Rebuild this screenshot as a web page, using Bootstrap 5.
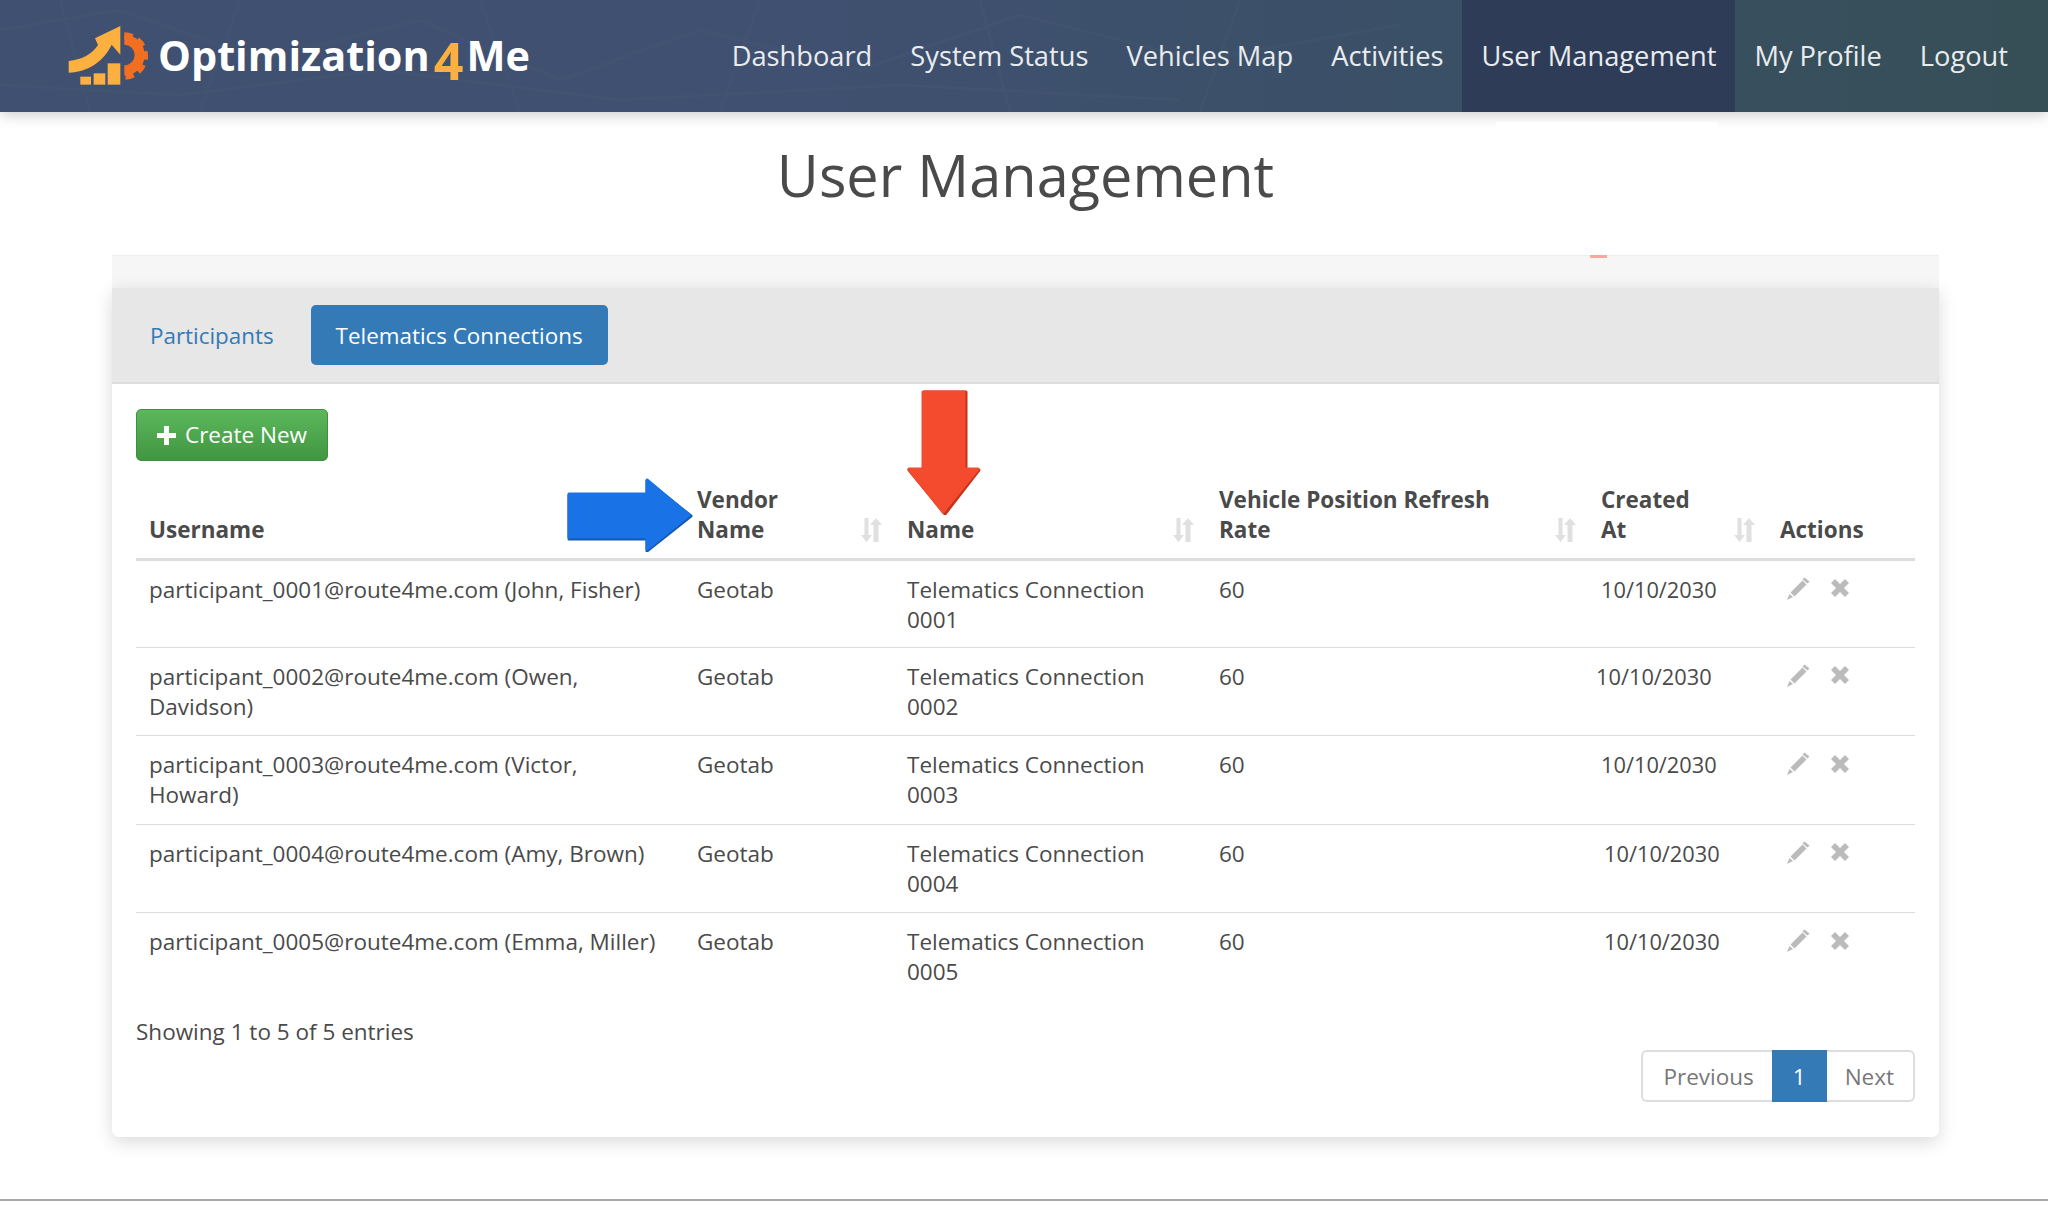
<!DOCTYPE html>
<html lang="en">
<head>
  <meta charset="UTF-8">
  <title>User Management | Optimization4Me</title>
  <link href="https://cdn.jsdelivr.net/npm/bootstrap@5.3.0/dist/css/bootstrap.min.css" rel="stylesheet">
  <style>
    body {
      font-family: "Open Sans", "Liberation Sans", sans-serif;
      font-size: 22.5px;
      line-height: 30px;
      color: #4a4a4a;
      background: #fff;
    }
    .site-bar {
      height: 112px;
      padding: 0 21px 0 0;
      background: linear-gradient(90deg, #3f5070 0%, #3f5070 40%, #3a5066 70%, #364f56 100%);
      box-shadow: 0 2px 14px rgba(0, 0, 0, .22);
      position: relative;
    }
    .bar-texture { position: absolute; left: 0; top: 0; }
    .site-bar .navbar-brand {
      display: flex;
      align-items: center;
      padding: 0;
      margin: 0 0 0 67px;
      font-size: 41.400px;
      font-weight: 700;
      color: #fff;
      line-height: 1;
      position: relative;
    }
    .logo-mark { margin-right: 5px; margin-top: -3px; }
    .logo-four { color: #fbb040; font-size: 52px; margin: 8px 3px 0 4px; line-height: 1; }
    .site-bar .navbar-nav { position: relative; }
    .site-bar .navbar-nav .nav-link {
      height: 112px;
      line-height: 112px;
      padding: 0 19px;
      font-size: 27.250px;
      color: #e9ecef;
    }
    .site-bar .navbar-nav .nav-link.active { background: #2f3c58; color: #e9ecef; }
    .shadow-patch {
      position: absolute;
      left: 1496px;
      top: 122px;
      width: 221px;
      height: 12px;
      background: #fff;
    }
    .page-title {
      font-size: 57.700px;
      line-height: 66px;
      font-weight: 400;
      text-align: center;
      color: #4a4a4a;
      margin: 30px 0 47px;
      padding-left: 3px;
    }
    .content-wrap { margin: 0 109px 0 112px; }
    .top-strip { height: 33px; background: #f6f6f6; border-top: 1px solid #eee; position: relative; }
    .strip-dot { position: absolute; left: 1478px; top: -1px; width: 17px; height: 3px; background: #f8a99b; }
    .panel-box {
      border: 0;
      border-radius: 0 0 7px 7px;
      box-shadow: 0 5px 18px rgba(0, 0, 0, .15);
      position: relative;
      height: 849px;
    }
    .panel-box .card-header {
      height: 96px;
      padding: 17px 13px;
      background: #e7e7e7;
      border-bottom: 2px solid #ddd;
      border-radius: 0;
    }
    .panel-box .nav-pills { gap: 12px; }
    .panel-box .nav-link {
      height: 60px;
      padding: 0 25px;
      line-height: 61px;
      font-size: 22.400px;
      color: #337ab7;
      border-radius: 5px;
    }
    .panel-box .nav-link.active { background: #337ab7; color: #fff; }
    .panel-box .card-body { padding: 25px 24px 0; }
    .btn-create {
      display: inline-flex;
      align-items: center;
      gap: 9px;
      width: 192px;
      height: 52px;
      padding: 0 0 0 20px;
      font-size: 22.500px;
      color: #fff;
      background: linear-gradient(180deg, #5cb85c 0%, #419641 100%);
      border: 1px solid #3e8f3e;
      border-radius: 5px;
    }
    .btn-create:hover { color: #fff; }
    .user-table { table-layout: fixed; width: 1779px; margin: 0; color: #4a4a4a; }
    .user-table th, .user-table td {
      padding: 14px 13px 12px;
      font-size: 22.500px;
      line-height: 30px;
      color: #4a4a4a;
      border-bottom: 1px solid #ddd;
      vertical-align: top;
    }
    .user-table thead th {
      font-weight: 700;
      vertical-align: bottom;
      padding: 0 12px 13px 13px;
      border-bottom: 3px solid #ddd;
      height: 98px;
    }
    .user-table tbody td { height: 88.400px; }
    .user-table tbody tr:last-child td { border-bottom: 0; }
    .user-table td.date-cell { font-size: 21.800px; }
    .user-table td.date-left { padding-left: 8px; }
    .user-table td.date-right { padding-left: 16px; }
    .head-cell { display: flex; justify-content: space-between; align-items: flex-end; }
    .sort-mark { flex: none; margin-bottom: 3px; }
    .row-tools { display: flex; align-items: center; gap: 21px; padding: 2px 0 0 7px; }
    .table-foot { margin-top: 16px; }
    .panel-box .pagination { margin: 3px 0 0; justify-content: flex-end; }
    .panel-box .page-link {
      height: 52px;
      line-height: 50px;
      padding: 0 19px;
      font-size: 22.500px;
      color: #777;
      border: 2px solid #ddd;
    }
    .panel-box .page-item.active .page-link {
      background: #337ab7;
      border-color: #337ab7;
      color: #fff;
      padding: 0 19px;
    }
    .panel-box .page-item:first-child .page-link { padding-left: 20px; border-right: 0; border-radius: 6px 0 0 6px; }
    .panel-box .page-item:last-child .page-link { border-left: 0; border-radius: 0 6px 6px 0; }
    .callout { position: absolute; }
    .callout-blue { left: 455px; top: 190px; }
    .callout-red { left: 795px; top: 102px; }
    .foot-rule { margin: 62px 0 0; border: 0; border-top: 2px solid #aaa; opacity: 1; }
  </style>
</head>
<body>

<svg width="0" height="0" class="d-block">
  <defs>
    <symbol id="ico-sort" viewBox="0 0 22 24">
      <path d="M4.500 0h4v17h3.500l-5.500 7L1 17h3.500z" fill="#e0e0e0"/>
      <path d="M13.500 24h5V7h3.500l-6-7-6 7h3.500z" fill="#e0e0e0"/>
    </symbol>
    <symbol id="ico-pencil" viewBox="0 0 23 23">
      <path d="M15.500 3.500l4 4L7.500 19.500l-4-4zM17.500 0.500l5 4-2 2-5-4zM2.500 17l3.500 3L0 23z" fill="#bbb"/>
    </symbol>
    <symbol id="ico-cross" viewBox="0 0 18 18">
      <path d="M4 0l5 5 5-5 4 4-5 5 5 5-4 4-5-5-5 5-4-4 5-5-5-5z" fill="#bbb"/>
    </symbol>
  </defs>
</svg>

<nav class="navbar navbar-expand site-bar">
  <svg class="bar-texture" width="1400" height="112" viewBox="0 0 1400 112">
    <path d="M0 30L120 10 260 60 420 20 560 80 700 30 860 70 1020 15 1200 60 1400 25M60 0L90 112M240 0L200 112M480 0L520 112M760 0L720 112M980 0L1010 112M1240 0L1200 112M0 85L180 95 380 70 620 100 900 85 1180 100" fill="none" stroke="#fff" stroke-opacity=".018" stroke-width="3"/>
  </svg>
  <a class="navbar-brand" href="#">
    <svg class="logo-mark" width="86" height="60" viewBox="50 42 258 180">
      <path d="M55 150c38-4 68-18 88-48l-9-20 76-37v86l-26-30c-24 50-70 82-129 84z" fill="#fbb040"/>
      <rect x="90" y="197" width="32" height="24" fill="#fbb040"/>
      <rect x="130" y="187" width="35" height="34" fill="#fbb040"/>
      <rect x="172" y="157" width="38" height="64" fill="#fbb040"/>
      <path d="M222 86a46 46 0 0 1 0 92" fill="none" stroke="#f26f21" stroke-width="30"/>
      <path d="M222 75a58 58 0 0 1 0 120" fill="none" stroke="#f26f21" stroke-width="22" stroke-dasharray="24 16"/>
    </svg>
    <span>Optimization</span><span class="logo-four">4</span><span>Me</span>
  </a>
  <ul class="navbar-nav ms-auto">
    <li class="nav-item"><a class="nav-link" href="#">Dashboard</a></li>
    <li class="nav-item"><a class="nav-link" href="#">System Status</a></li>
    <li class="nav-item"><a class="nav-link" href="#">Vehicles Map</a></li>
    <li class="nav-item"><a class="nav-link" href="#">Activities</a></li>
    <li class="nav-item"><a class="nav-link active" href="#">User Management</a></li>
    <li class="nav-item"><a class="nav-link" href="#">My Profile</a></li>
    <li class="nav-item"><a class="nav-link" href="#">Logout</a></li>
  </ul>
  <div class="shadow-patch"></div>
</nav>

<h1 class="page-title">User Management</h1>

<div class="content-wrap">
  <div class="top-strip"><div class="strip-dot"></div></div>
  <div class="card panel-box">
    <div class="card-header">
      <ul class="nav nav-pills">
        <li class="nav-item"><a class="nav-link" href="#">Participants</a></li>
        <li class="nav-item"><a class="nav-link active" href="#">Telematics Connections</a></li>
      </ul>
    </div>
    <div class="card-body">
      <a class="btn btn-create" href="#">
        <svg width="19" height="19" viewBox="0 0 19 19"><path d="M7 0h5v7h7v5h-7v7H7v-7H0V7h7z" fill="#fff"/></svg>
        Create New
      </a>
      <table class="table user-table">
        <colgroup>
          <col style="width: 548px"><col style="width: 210px"><col style="width: 312px">
          <col style="width: 382px"><col style="width: 179px"><col style="width: 148px">
        </colgroup>
        <thead>
          <tr>
            <th>Username</th>
            <th><div class="head-cell"><span>Vendor<br>Name</span><svg class="sort-mark" width="22" height="24"><use href="#ico-sort"/></svg></div></th>
            <th><div class="head-cell"><span>Name</span><svg class="sort-mark" width="22" height="24"><use href="#ico-sort"/></svg></div></th>
            <th><div class="head-cell"><span>Vehicle Position Refresh<br>Rate</span><svg class="sort-mark" width="22" height="24"><use href="#ico-sort"/></svg></div></th>
            <th><div class="head-cell"><span>Created<br>At</span><svg class="sort-mark" width="22" height="24"><use href="#ico-sort"/></svg></div></th>
            <th>Actions</th>
          </tr>
        </thead>
        <tbody>
          <tr>
            <td>participant_0001@route4me.com (John, Fisher)</td>
            <td>Geotab</td>
            <td>Telematics Connection 0001</td>
            <td>60</td>
            <td class="date-cell">10/10/2030</td>
            <td><div class="row-tools"><svg width="23" height="23"><use href="#ico-pencil"/></svg><svg width="18" height="18"><use href="#ico-cross"/></svg></div></td>
          </tr>
          <tr>
            <td>participant_0002@route4me.com (Owen, Davidson)</td>
            <td>Geotab</td>
            <td>Telematics Connection 0002</td>
            <td>60</td>
            <td class="date-cell date-left">10/10/2030</td>
            <td><div class="row-tools"><svg width="23" height="23"><use href="#ico-pencil"/></svg><svg width="18" height="18"><use href="#ico-cross"/></svg></div></td>
          </tr>
          <tr>
            <td>participant_0003@route4me.com (Victor, Howard)</td>
            <td>Geotab</td>
            <td>Telematics Connection 0003</td>
            <td>60</td>
            <td class="date-cell">10/10/2030</td>
            <td><div class="row-tools"><svg width="23" height="23"><use href="#ico-pencil"/></svg><svg width="18" height="18"><use href="#ico-cross"/></svg></div></td>
          </tr>
          <tr>
            <td>participant_0004@route4me.com (Amy, Brown)</td>
            <td>Geotab</td>
            <td>Telematics Connection 0004</td>
            <td>60</td>
            <td class="date-cell date-right">10/10/2030</td>
            <td><div class="row-tools"><svg width="23" height="23"><use href="#ico-pencil"/></svg><svg width="18" height="18"><use href="#ico-cross"/></svg></div></td>
          </tr>
          <tr>
            <td>participant_0005@route4me.com (Emma, Miller)</td>
            <td>Geotab</td>
            <td>Telematics Connection 0005</td>
            <td>60</td>
            <td class="date-cell date-right">10/10/2030</td>
            <td><div class="row-tools"><svg width="23" height="23"><use href="#ico-pencil"/></svg><svg width="18" height="18"><use href="#ico-cross"/></svg></div></td>
          </tr>
        </tbody>
      </table>
      <div class="table-foot">Showing 1 to 5 of 5 entries</div>
      <ul class="pagination">
        <li class="page-item"><a class="page-link" href="#">Previous</a></li>
        <li class="page-item active"><a class="page-link" href="#">1</a></li>
        <li class="page-item"><a class="page-link" href="#">Next</a></li>
      </ul>
    </div>
    <svg class="callout callout-blue" width="126" height="74" viewBox="0 0 126 74">
      <path d="M2 17H80V3L124 38 80 73V61H2z" fill="#1359b0" stroke="#1359b0" stroke-width="3" stroke-linejoin="round"/>
      <path d="M2 16H80V2L122 37 80 71V59H2z" fill="#1a73e6" stroke="#1a73e6" stroke-width="3" stroke-linejoin="round"/>
    </svg>
    <svg class="callout callout-red" width="74" height="125" viewBox="0 0 74 125">
      <path d="M17 2H59V80H72L38 124 2 80H17z" fill="#c2321d" stroke="#c2321d" stroke-width="3" stroke-linejoin="round"/>
      <path d="M16 2H57V79H71L36 122 2 79H16z" fill="#f44a2e" stroke="#f44a2e" stroke-width="3" stroke-linejoin="round"/>
    </svg>
  </div>
</div>

<hr class="foot-rule">

<script src="https://cdn.jsdelivr.net/npm/bootstrap@5.3.0/dist/js/bootstrap.bundle.min.js"></script>
</body>
</html>
